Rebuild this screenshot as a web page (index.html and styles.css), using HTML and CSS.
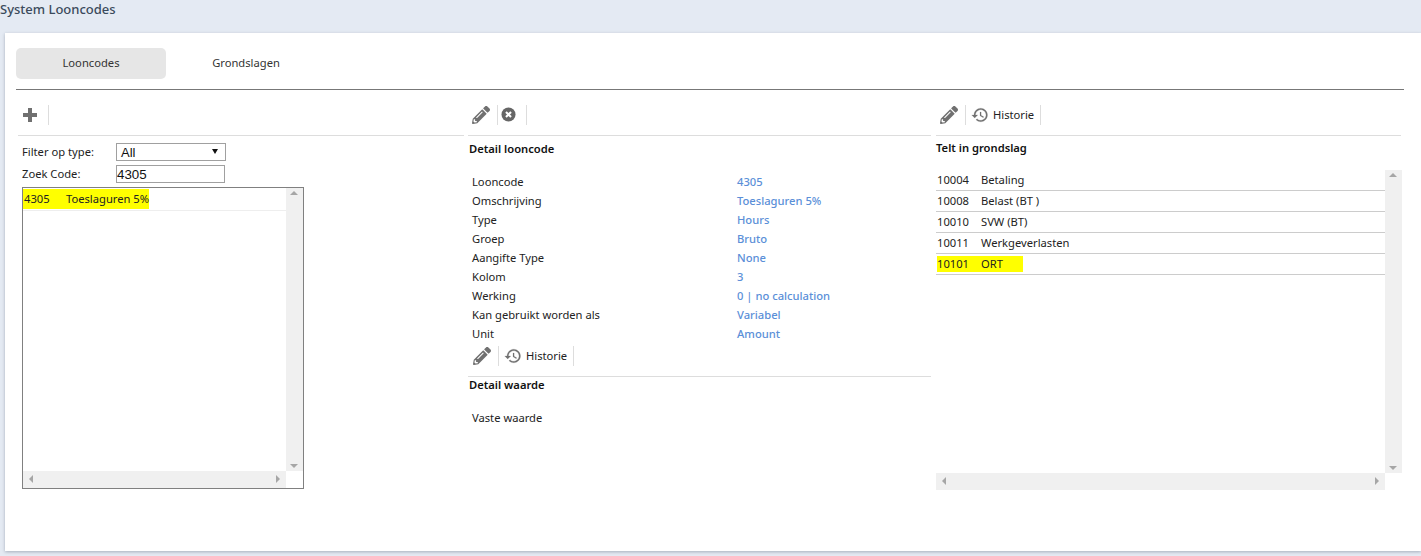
FILE: index.html
```html
<!DOCTYPE html>
<html lang="nl">

<head>
  <meta charset="UTF-8">
  <title>System Looncodes</title>
  <link rel="stylesheet" href="styles.css">
</head>

<body>
  <svg class="icon-defs" width="0" height="0">
    <symbol id="i-pencil" viewBox="0 0 512 512">
      <path d="M497.9 142.1l-46.1 46.1c-4.7 4.7-12.3 4.7-17 0l-111-111c-4.7-4.7-4.7-12.3 0-17l46.1-46.1c18.7-18.7 49.1-18.7 67.9 0l60.1 60.1c18.8 18.7 18.8 49.1 0 68zM284.2 99.8L21.6 362.4.4 483.9c-2.9 16.4 11.4 30.6 27.8 27.8l121.5-21.3 262.6-262.6c4.7-4.7 4.7-12.3 0-17l-111-111c-4.8-4.7-12.4-4.7-17.1 0zM124.1 339.9c-5.5-5.5-5.5-14.3 0-19.8l154-154c5.5-5.5 14.3-5.5 19.8 0s5.5 14.3 0 19.8l-154 154c-5.5 5.5-14.3 5.5-19.8 0zM88 424h48v36.3l-64.5 11.3-31.1-31.1L51.7 376H88v48z" />
    </symbol>
    <symbol id="i-history" viewBox="0 0 24 24">
      <path d="M13 3c-4.97 0-9 4.03-9 9H1l3.89 3.89.07.14L9 12H6c0-3.87 3.13-7 7-7s7 3.13 7 7-3.13 7-7 7c-1.93 0-3.68-.79-4.94-2.06l-1.42 1.42C8.27 19.99 10.51 21 13 21c4.97 0 9-4.03 9-9s-4.03-9-9-9zm-1 5v5l4.28 2.54.72-1.21-3.5-2.08V8H12z" />
    </symbol>
    <symbol id="i-close" viewBox="0 0 16 16">
      <circle cx="8" cy="8" r="7.5" />
      <path d="M5.3 5.3l5.4 5.4M10.7 5.3l-5.4 5.4" stroke="#fff" stroke-width="2.2" />
    </symbol>
    <symbol id="i-plus" viewBox="0 0 16 16">
      <path d="M6 1h4v5h5v4h-5v5H6v-5H1V6h5z" />
    </symbol>
  </svg>

  <header class="page-title">System Looncodes</header>

  <main class="card">
    <nav class="tabs">
      <div class="tab active">Looncodes</div>
      <div class="tab">Grondslagen</div>
    </nav>

    <div class="columns">
      <section class="col col-left">
        <div class="toolbar">
          <button class="tool tool-plus"><svg><use href="#i-plus" /></svg></button>
        </div>
        <div class="filter-row">
          <label>Filter op type:</label>
          <div class="filter-select">All<i class="caret"></i></div>
        </div>
        <div class="filter-row search-row">
          <label>Zoek Code:</label>
          <input class="filter-input" value="4305">
        </div>
        <div class="list-box">
          <div class="list-body">
            <div class="code-row"><span class="mark"><span class="code">4305</span>Toeslaguren 5%</span></div>
          </div>
          <div class="vbar"><i class="arrow up"></i><i class="arrow down"></i></div>
          <div class="hbar"><i class="arrow left"></i><i class="arrow right"></i></div>
        </div>
      </section>

      <section class="col col-mid">
        <div class="toolbar">
          <button class="tool"><svg><use href="#i-pencil" /></svg></button>
          <button class="tool tool-close"><svg><use href="#i-close" /></svg></button>
        </div>
        <h4>Detail looncode</h4>
        <dl class="details">
          <dt>Looncode</dt>
          <dd>4305</dd>
          <dt>Omschrijving</dt>
          <dd>Toeslaguren 5%</dd>
          <dt>Type</dt>
          <dd>Hours</dd>
          <dt>Groep</dt>
          <dd>Bruto</dd>
          <dt>Aangifte Type</dt>
          <dd>None</dd>
          <dt>Kolom</dt>
          <dd>3</dd>
          <dt>Werking</dt>
          <dd>0 | no calculation</dd>
          <dt>Kan gebruikt worden als</dt>
          <dd>Variabel</dd>
          <dt>Unit</dt>
          <dd>Amount</dd>
        </dl>
        <div class="toolbar toolbar-small">
          <button class="tool"><svg><use href="#i-pencil" /></svg></button>
          <button class="tool tool-history"><svg><use href="#i-history" /></svg>Historie</button>
        </div>
        <h4 class="sub-head">Detail waarde</h4>
        <div class="fixed-value">Vaste waarde</div>
      </section>

      <section class="col col-right">
        <div class="toolbar">
          <button class="tool"><svg><use href="#i-pencil" /></svg></button>
          <button class="tool tool-history"><svg><use href="#i-history" /></svg>Historie</button>
        </div>
        <h4>Telt in grondslag</h4>
        <div class="base-box">
          <div class="base-list">
            <div class="base-row"><span class="code">10004</span>Betaling</div>
            <div class="base-row"><span class="code">10008</span>Belast (BT )</div>
            <div class="base-row"><span class="code">10010</span>SVW (BT)</div>
            <div class="base-row"><span class="code">10011</span>Werkgeverlasten</div>
            <div class="base-row"><span class="mark"><span class="code">10101</span>ORT</span></div>
          </div>
          <div class="vbar"><i class="arrow up"></i><i class="arrow down"></i></div>
          <div class="hbar"><i class="arrow left"></i><i class="arrow right"></i></div>
        </div>
      </section>
    </div>
  </main>
</body>

</html>
```

FILE: styles.css
```css
* {
  box-sizing: border-box;
}

html,
body {
  height: 100%;
}

body {
  margin: 0;
  background: #e4eaf3;
  font-family: 'Noto Sans', 'Open Sans', sans-serif;
  font-size: 11.2px;
  color: #222;
  overflow: hidden;
}

.icon-defs {
  position: absolute;
}

.page-title {
  height: 33px;
  font-size: 13px;
  font-weight: 500;
  line-height: 19px;
  color: #3b4a5c;
}

.card {
  height: 518px;
  margin-left: 5px;
  padding: 15px 0 0 11px;
  background: #fff;
  box-shadow: 0 1px 3px rgba(90, 100, 120, 0.45);
}

.tabs {
  display: flex;
  gap: 5px;
  width: 1388px;
  height: 42px;
  border-bottom: 1px solid #777;
}

.tab {
  width: 150px;
  height: 31px;
  line-height: 30px;
  text-align: center;
  color: #333;
  border-radius: 5px;
}

.tab.active {
  background: #e6e6e6;
}

.columns {
  display: grid;
  grid-template-columns: 450px 468px 467px;
  padding-top: 10px;
}

.col {
  padding-left: 2px;
}

.col-left {
  width: 448px;
}

.col-mid {
  width: 465px;
}

.toolbar {
  display: flex;
  align-items: center;
  height: 36px;
  padding-bottom: 6px;
  border-bottom: 1px solid #ddd;
}

.tool {
  display: flex;
  align-items: center;
  gap: 4px;
  height: 20px;
  padding: 0 7px 0 4px;
  border: 0;
  border-right: 1px solid #ddd;
  background: none;
  font: inherit;
  color: #222;
}

.tool svg {
  width: 18px;
  height: 18px;
  fill: #707070;
}

.tool-plus {
  padding: 0 10px 0 4px;
}

.tool-plus svg {
  width: 16px;
  height: 16px;
}

.tool-close {
  padding-left: 3px;
  padding-right: 10px;
}

.tool-close svg {
  width: 15px;
  height: 15px;
  fill: #666;
}

.tool-history {
  padding-left: 5px;
  padding-right: 6px;
}

.tool-history svg {
  stroke: #707070;
  stroke-width: 0.25;
}

.filter-row {
  display: flex;
  align-items: center;
  height: 18px;
  margin: 7px 0 0 4px;
}

.search-row {
  margin-top: 4px;
}

.filter-row label {
  width: 94px;
  padding-bottom: 2px;
}

.filter-select {
  position: relative;
  width: 110px;
  height: 18px;
  padding-left: 4px;
  border: 1px solid #a0a0a0;
  background: #fff;
  font-family: 'Liberation Sans', sans-serif;
  font-size: 13px;
  line-height: 17px;
  color: #111;
}

.caret {
  position: absolute;
  top: 5px;
  right: 7px;
  border: 3px solid transparent;
  border-bottom: 0;
  border-top: 5px solid #111;
}

.filter-input {
  width: 109px;
  height: 18px;
  padding: 0;
  border: 1px solid #a0a0a0;
  font-family: 'Liberation Sans', sans-serif;
  font-size: 13.33px;
  color: #111;
}

.list-box {
  display: grid;
  grid-template-columns: 263px 17px;
  grid-template-rows: 283px 17px;
  width: 282px;
  height: 302px;
  margin: 4px 0 0 4px;
  border: 1px solid #808080;
}

.base-box {
  display: grid;
  grid-template-columns: 449px 17px;
  grid-template-rows: 303px 17px;
  margin-top: 14px;
}

.code-row {
  height: 23px;
  padding-top: 1px;
  border-bottom: 1px solid #eee;
  line-height: 20px;
}

.mark {
  display: inline-block;
  background: #ff0;
}

.code-row .code {
  display: inline-block;
  width: 43px;
  padding-left: 1px;
}

.base-row {
  height: 21px;
  padding-left: 1px;
  border-bottom: 1px solid #ccc;
  line-height: 19px;
}

.base-row .code {
  display: inline-block;
  width: 44px;
}

.base-row .mark {
  width: 86px;
  height: 16px;
  line-height: 16px;
  vertical-align: 0;
}

.vbar,
.hbar {
  position: relative;
  background: #f0f0f0;
}

.arrow {
  position: absolute;
  width: 0;
  height: 0;
  border: 4px solid transparent;
}

.arrow.up {
  top: 3px;
  left: 4px;
  border-top: 0;
  border-bottom: 4px solid #a6a6a6;
}

.arrow.down {
  bottom: 3px;
  left: 4px;
  border-bottom: 0;
  border-top: 4px solid #a6a6a6;
}

.arrow.left {
  top: 4px;
  left: 6px;
  border-left: 0;
  border-right: 4px solid #a6a6a6;
}

.arrow.right {
  top: 4px;
  right: 6px;
  border-right: 0;
  border-left: 4px solid #a6a6a6;
}

h4 {
  margin: 0;
  padding-top: 5px;
  font-size: 11.2px;
  font-weight: 600;
  line-height: 16px;
  color: #111;
}

.col-mid h4 {
  padding-left: 1px;
}

.col-right h4 {
  padding-top: 4px;
}

.details {
  display: grid;
  grid-template-columns: 265px 1fr;
  grid-auto-rows: 19px;
  margin: 15px 0 0 4px;
  line-height: 19px;
}

.details dt,
.details dd {
  margin: 0;
}

.details dd {
  font-weight: 500;
  color: #5b8fd8;
}

.toolbar-small {
  height: 34px;
  padding-left: 1px;
  padding-bottom: 8px;
}

.col-mid .sub-head {
  padding-top: 0;
}

.fixed-value {
  margin: 17px 0 0 4px;
}
```
